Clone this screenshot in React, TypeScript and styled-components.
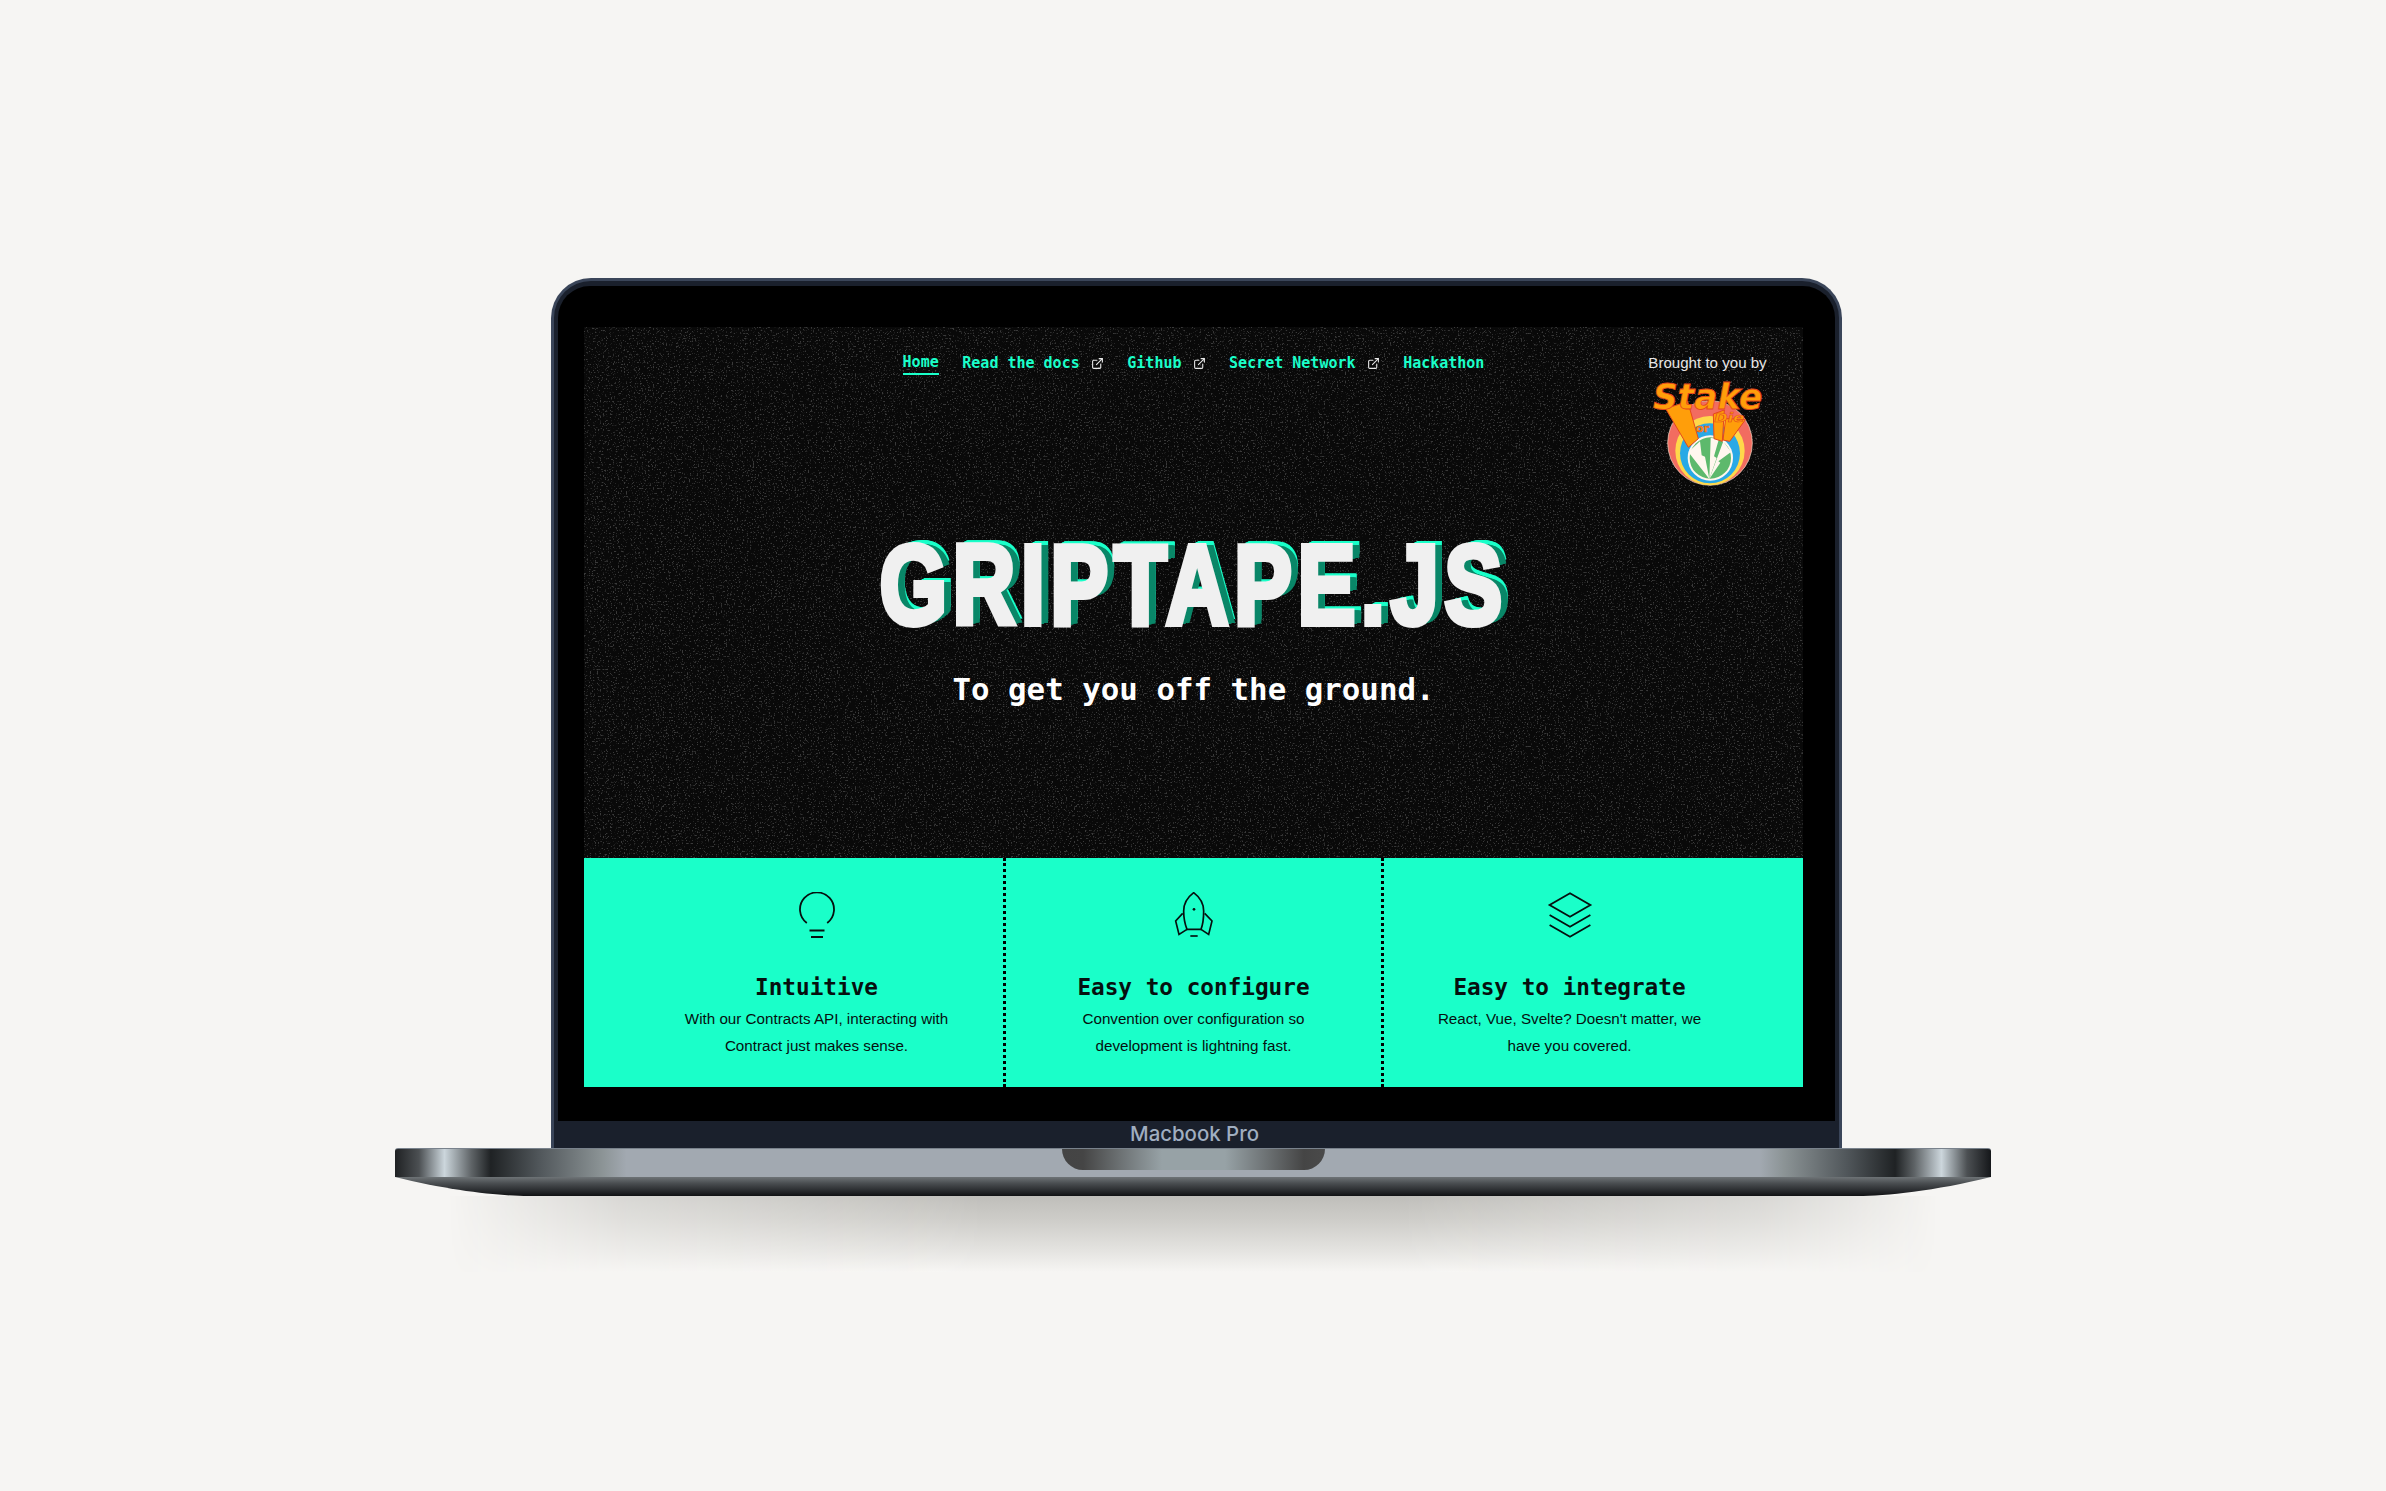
import React from 'react';
import styled, { createGlobalStyle } from 'styled-components';
import { ExternalLink } from 'lucide-react';

const GlobalStyle = createGlobalStyle`
  html, body {
    margin: 0;
    padding: 0;
    background: #f6f5f3;
  }
`;

const MONO = `'DejaVu Sans Mono', 'Liberation Mono', monospace`;
const SANS = `'Liberation Sans', Arial, sans-serif`;
const MINT = '#1affc9';

const TITLE_SCALE = 0.77;

// outline on top, then the dark side faces, then the bright top faces
function extrudeShadow() {
  const layers: string[] = ['1.4px 0 #333', '-1.4px 0 #333', '0 1.1px #333', '0 -1.1px #333'];
  for (let i = 1; i <= 9; i++) layers.push(`${i / TITLE_SCALE}px ${-i * 0.1}px #0a8768`);
  for (let i = 1; i <= 9; i++) layers.push(`${i / TITLE_SCALE}px ${-i * 0.6}px ${MINT}`);
  return layers.join(', ');
}

const NOISE = encodeURIComponent(
  `<svg xmlns='http://www.w3.org/2000/svg' width='1300' height='600'><filter id='n' x='0' y='0' width='100%' height='100%'><feTurbulence type='fractalNoise' baseFrequency='0.62' numOctaves='3' seed='7'/><feColorMatrix values='0 0 0 0 1 0 0 0 0 1 0 0 0 0 1 0 0 0 7 -4.2'/></filter><rect width='1300' height='600' filter='url(#n)' opacity='0.2'/></svg>`
);

const Page = styled.div`
  height: 1491px;
  overflow: hidden;
  padding-top: 278px;
  box-sizing: border-box;
  display: flex;
  flex-direction: column;
  align-items: center;
  background: #f6f5f3;
`;

const Lid = styled.div`
  width: 1291px;
  height: 870px;
  box-sizing: border-box;
  margin-left: 7px;
  border: 3px solid #3a4559;
  border-bottom: none;
  border-radius: 40px 40px 0 0;
  padding: 5px 4px 0;
  background: #1a202c;
  display: flex;
  flex-direction: column;
`;

const ScreenFrame = styled.div`
  height: 835px;
  box-sizing: border-box;
  padding: 41px 32px 34px 26px;
  background: #000;
  border-radius: 32px 32px 0 0;
`;

const Screen = styled.div`
  height: 760px;
  display: flex;
  flex-direction: column;
`;

const Chin = styled.div`
  flex: 1;
  display: flex;
  align-items: center;
  justify-content: center;
  padding: 0 4px 5px 0;
  font-family: Inter, 'Noto Sans', sans-serif;
  font-weight: 500;
  font-size: 20.4px;
  color: #a0aec0;
`;

const Hero = styled.section`
  height: 531px;
  box-sizing: border-box;
  padding-top: 25px;
  background-color: #090909;
  background-image: url("data:image/svg+xml,${NOISE}");
`;

const Header = styled.header`
  display: grid;
  grid-template-columns: 1fr auto 1fr;
  align-items: start;
`;

const Nav = styled.nav`
  grid-column: 2;
  display: flex;
  gap: 23.6px;
`;

const NavItem = styled.a<{ $active?: boolean }>`
  display: flex;
  align-items: center;
  gap: 11px;
  height: 22px;
  font-family: ${MONO};
  font-weight: 700;
  font-size: 15px;
  line-height: 22px;
  color: ${MINT};
  text-decoration: none;
  span {
    display: block;
    height: 22px;
    border-bottom: ${props => (props.$active ? `2px solid ${MINT}` : 'none')};
  }
  svg {
    color: #e8e8e8;
  }
`;

const Credits = styled.div`
  grid-column: 3;
  justify-self: end;
  display: flex;
  flex-direction: column;
  align-items: center;
  padding-right: 33px;
  font-family: ${SANS};
  font-size: 15.1px;
  line-height: 22px;
  color: #e6e6e6;
`;

const StakeLogo = styled.svg`
  display: block;
  margin-top: 4px;
  width: 125px;
  height: 110px;
`;

const LogoLabel = styled.text`
  font-family: 'DejaVu Sans', sans-serif;
  font-weight: 700;
  fill: #ff9e0a;
  stroke: #e5481c;
`;

const Title = styled.h1`
  margin: 41px 0 0;
  height: 113px;
  text-align: center;
  font-family: ${SANS};
  font-weight: 700;
  font-size: 113px;
  line-height: 1;
  white-space: nowrap;
  letter-spacing: 7px;
  color: #f0f0f0;
  -webkit-text-stroke: 6px #f0f0f0;
  text-shadow: ${extrudeShadow()};
  transform: scaleX(${TITLE_SCALE});
`;

const Tagline = styled.p`
  margin: 29px 0 0;
  text-align: center;
  font-family: ${MONO};
  font-weight: 700;
  font-size: 30.8px;
  line-height: 36px;
  color: #fff;
`;

const Features = styled.section`
  height: 229px;
  display: grid;
  grid-template-columns: 419px 378px 422px;
  background: ${MINT};
  color: #06100f;
`;

const Feature = styled.div<{ $padLeft?: number; $padRight?: number; $divider?: boolean }>`
  box-sizing: border-box;
  padding: 34px ${props => props.$padRight ?? 0}px 0 ${props => props.$padLeft ?? 0}px;
  border-left: ${props => (props.$divider ? '3px dotted #000' : 'none')};
  display: flex;
  flex-direction: column;
  align-items: center;
  text-align: center;
`;

const IconBox = styled.svg`
  display: block;
  width: 46px;
  height: 46px;
  fill: none;
  stroke: #06100f;
  stroke-width: 1.8;
`;

const FeatureTitle = styled.h3`
  margin: 34px 0 3px;
  font-family: ${MONO};
  font-weight: 700;
  font-size: 22.7px;
  line-height: 30px;
`;

const FeatureText = styled.p`
  margin: 0;
  max-width: 290px;
  font-family: ${SANS};
  font-size: 15.2px;
  line-height: 27px;
`;

const Base = styled.div`
  width: 1596px;
  display: flex;
  flex-direction: column;
`;

const BaseBar = styled.div`
  height: 29px;
  box-sizing: border-box;
  border-top: 1px solid #79828c;
  border-radius: 3px 3px 0 0;
  display: flex;
  justify-content: center;
  background: linear-gradient(
    90deg,
    #1f2123 0%,
    #4c5053 1.5%,
    #ccd6dc 3.1%,
    #5e6366 4.8%,
    #1f2224 6%,
    #50565a 9%,
    #8c9496 13%,
    #a2a9b1 14.5%,
    #a2a9b1 85.5%,
    #8c9496 87%,
    #50565a 91%,
    #1f2224 94%,
    #5e6366 95.2%,
    #ccd6dc 96.9%,
    #4c5053 98.5%,
    #15171a 100%
  );
`;

const Notch = styled.div`
  width: 263px;
  height: 21px;
  border-radius: 0 0 22px 22px;
  background: linear-gradient(90deg, #444 0%, #454545 8%, #6c7173 22%, #97a2a6 38%, #97a2a6 62%, #6c7173 78%, #454545 92%, #4a4a4a 100%);
`;

const BaseLip = styled.div`
  height: 19px;
  clip-path: path('M0 0 H1596 C1540 14 1490 19 1463 19 H133 C106 19 56 14 0 0 Z');
  background: linear-gradient(180deg, #6e7376 0%, #484c4f 35%, #222427 80%, #101113 100%);
`;

const GroundShadow = styled.div`
  width: 1490px;
  height: 76px;
  background: linear-gradient(180deg, #bfbeba 0%, #cdccc8 30%, #e2e1de 68%, #f6f5f3 100%);
  mask-image: linear-gradient(90deg, transparent 0%, rgba(0, 0, 0, 0.55) 12%, #000 36%, #000 64%, rgba(0, 0, 0, 0.55) 88%, transparent 100%);
`;

function StakeMark() {
  return (
    <StakeLogo viewBox="0 0 375 330">
      <circle cx="195" cy="195" r="127" fill="#f26c60" stroke="#f3ddc8" strokeWidth="2" />
      <circle cx="195" cy="218" r="104" fill="#ffd84a" />
      <circle cx="195" cy="226" r="90" fill="#29a9e6" />
      <circle cx="196" cy="240" r="68" fill="#fff7ee" />
      <circle cx="196" cy="240" r="62" fill="#5db96c" />
      <polygon points="193,303 130,222 165,190 170,232 180,236" fill="#fff7ee" />
      <polygon points="193,303 197,180 222,182 207,235 215,240" fill="#fff7ee" />
      <polygon points="193,303 235,190 258,222 220,250 226,254" fill="#fff7ee" />
      <polygon points="62,92 128,70 160,182 130,208" fill="#ff9e0a" stroke="#e5481c" strokeWidth="3" />
      <polygon points="205,108 238,96 232,190 207,182" fill="#ff9e0a" stroke="#e5481c" strokeWidth="3" />
      <polygon points="242,122 302,124 254,190 234,186" fill="#ff9e0a" stroke="#e5481c" strokeWidth="3" />
      <LogoLabel x="24" y="92" textLength="328" lengthAdjust="spacingAndGlyphs" fontStyle="italic" fontSize="104" strokeWidth="2.5">Stake</LogoLabel>
      <LogoLabel x="152" y="162" fontSize="34" strokeWidth="1.5">or</LogoLabel>
      <LogoLabel x="208" y="132" textLength="90" lengthAdjust="spacingAndGlyphs" fontStyle="italic" fontSize="36" strokeWidth="1.5">Die</LogoLabel>
    </StakeLogo>
  );
}

function BulbIcon() {
  return (
    <IconBox viewBox="0 0 46 46">
      <path d="M12.8 31 A17 17 0 1 1 33.2 31" />
      <path d="M15.5 38.5 H30.5 M17 45 H29" />
    </IconBox>
  );
}

function RocketIcon() {
  return (
    <IconBox viewBox="-7 18 138 138">
      <g transform="translate(-37 0)" strokeWidth="5">
        <path d="M98 20 C78 35 68 55 68 75 C68 95 72 115 78 130 H120 C126 115 128 95 128 75 C128 55 118 35 98 20 Z" />
        <path d="M65 82 L44 105 L54 145 L78 130 M131 82 L153 105 L143 145 L120 130" />
        <path d="M88 150 H110" />
        <circle cx="99" cy="70" r="4" fill="#06100f" stroke="none" />
      </g>
    </IconBox>
  );
}

function StackIcon() {
  return (
    <IconBox viewBox="0 0 46 46">
      <path d="M23 1.3 L43.4 13 L23 24.7 L2.6 13 Z" />
      <path d="M2.6 23 L23 34.7 L43.4 23" />
      <path d="M2.6 33 L23 44.7 L43.4 33" />
    </IconBox>
  );
}

export default function App() {
  return (
    <Page>
      <GlobalStyle />
      <Lid>
        <ScreenFrame>
          <Screen>
            <Hero>
              <Header>
                <Nav>
                  <NavItem $active><span>Home</span></NavItem>
                  <NavItem><span>Read the docs</span><ExternalLink size={13} /></NavItem>
                  <NavItem><span>Github</span><ExternalLink size={13} /></NavItem>
                  <NavItem><span>Secret Network</span><ExternalLink size={13} /></NavItem>
                  <NavItem><span>Hackathon</span></NavItem>
                </Nav>
                <Credits>
                  Brought to you by
                  <StakeMark />
                </Credits>
              </Header>
              <Title>GRIPTAPE.JS</Title>
              <Tagline>To get you off the ground.</Tagline>
            </Hero>
            <Features>
              <Feature $padLeft={46}>
                <BulbIcon />
                <FeatureTitle>Intuitive</FeatureTitle>
                <FeatureText>With our Contracts API, interacting with Contract just makes sense.</FeatureText>
              </Feature>
              <Feature $divider>
                <RocketIcon />
                <FeatureTitle>Easy to configure</FeatureTitle>
                <FeatureText>Convention over configuration so development is lightning fast.</FeatureText>
              </Feature>
              <Feature $divider $padRight={48}>
                <StackIcon />
                <FeatureTitle>Easy to integrate</FeatureTitle>
                <FeatureText>React, Vue, Svelte? Doesn't matter, we have you covered.</FeatureText>
              </Feature>
            </Features>
          </Screen>
        </ScreenFrame>
        <Chin>Macbook Pro</Chin>
      </Lid>
      <Base>
        <BaseBar><Notch /></BaseBar>
        <BaseLip />
      </Base>
      <GroundShadow />
    </Page>
  );
}
